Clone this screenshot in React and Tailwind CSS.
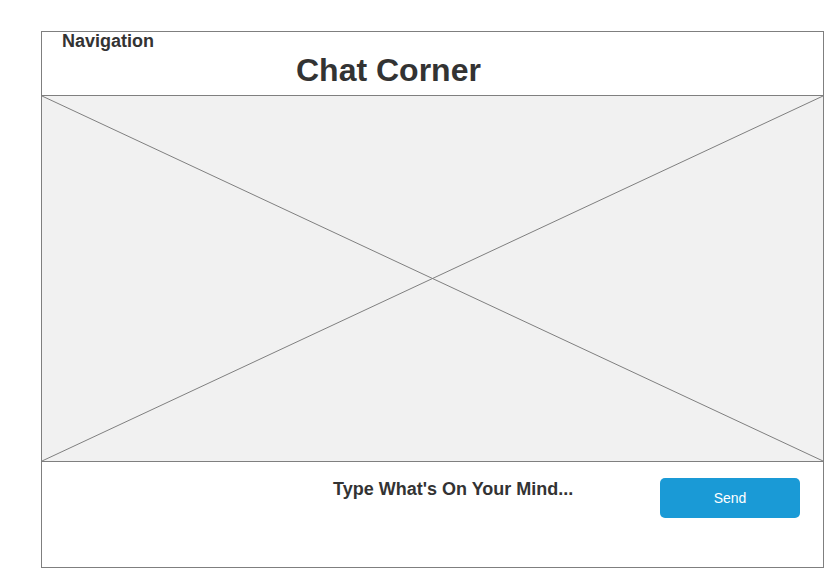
import React from "react";

function Placeholder() {
  return (
    <div className="relative h-[367px] border-y border-[#7f7f7f] bg-[#f1f1f1]">
      <svg className="absolute inset-0 h-full w-full" viewBox="0 0 100 100" preserveAspectRatio="none">
        <line x1="0" y1="0" x2="100" y2="100" stroke="#7f7f7f" strokeWidth="1" vectorEffect="non-scaling-stroke" />
        <line x1="100" y1="0" x2="0" y2="100" stroke="#7f7f7f" strokeWidth="1" vectorEffect="non-scaling-stroke" />
      </svg>
    </div>
  );
}

export default function App() {
  return (
    <div className="min-h-[568px] bg-white pl-[41px] pt-[31px] font-['Liberation_Sans',Arial,sans-serif] text-[#333333]">
      <div className="flex h-[537px] w-[783px] flex-col border border-[#7f7f7f]">
        {/* header */}
        <div className="h-[63px]">
          <div className="pl-[20px] text-[18px] font-bold leading-[18px]">Navigation</div>
          <div className="pl-[254px] pt-[2px] text-[32px] font-bold leading-[36px]">Chat Corner</div>
        </div>

        <Placeholder />

        {/* input row */}
        <div className="flex flex-1 items-start pt-[16px]">
          <div className="mt-[1px] pl-[291px] text-[18px] font-bold leading-[20px]">Type What's On Your Mind...</div>
          <button className="ml-auto mr-[23px] flex h-[40px] w-[140px] items-center justify-center rounded-[5px] bg-[#1a9ad6] text-[14px] text-white">
            Send
          </button>
        </div>
      </div>
    </div>
  );
}
